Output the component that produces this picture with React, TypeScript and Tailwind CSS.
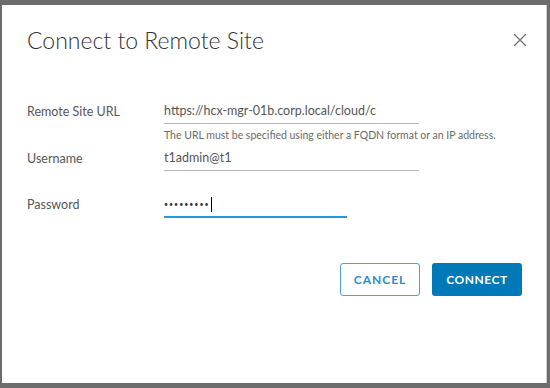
export default function App() {
  return (
    <div className="flex h-[388px] w-[550px] bg-[#6d6d6d] pl-[2px] pr-[3px] pt-[5px] pb-[5px] font-['Lato',sans-serif]">
      <div className="flex flex-1 flex-col border-r-[1px] border-r-[#d0d0d0] bg-white">
        <header className="flex items-start justify-between pl-[25px] pr-[19px] pt-[20px]">
          <h1 className="text-[23px] font-light leading-[30px] text-[#333]">
            Connect to Remote Site
          </h1>
          <button className="mt-[8px] text-[#747474]">
            <svg width="14" height="14" viewBox="0 0 14 14" fill="none" stroke="currentColor" strokeWidth="1.3">
              <path d="M1 1 L13 13 M13 1 L1 13" />
            </svg>
          </button>
        </header>

        <form className="mt-[45px] grid grid-cols-[137px_255px] pl-[25px] text-[12.5px] text-[#565656]">
          <label className="flex h-[24px] items-center">Remote Site URL</label>
          <div>
            <div className="flex h-[24px] items-center whitespace-nowrap border-b border-[#b5b5b5]">
              https://hcx-mgr-01b.corp.local/cloud/c
            </div>
            <p className="mt-[4px] w-[340px] whitespace-nowrap text-[10.5px] leading-[14px] text-[#6a6a6a]">
              The URL must be specified using either a FQDN format or an IP address.
            </p>
          </div>

          <label className="mt-[5px] flex h-[24px] items-center">Username</label>
          <div className="mt-[5px] flex h-[24px] items-center border-b border-[#b5b5b5]">
            t1admin@t1
          </div>

          <label className="mt-[22px] flex h-[25px] items-center">Password</label>
          <div className="mt-[22px] w-[183px] border-b-2 border-[#1f9ae0]">
            <div className="flex h-[23px] items-center">
              <span className="text-[7px] tracking-[1px] text-[#333]">•••••••••</span>
              <span className="ml-[1px] h-[15px] w-[1px] bg-black" />
            </div>
          </div>
        </form>

        <div className="mt-[45px] flex justify-end gap-[12px] pr-[24px]">
          <button className="h-[33px] w-[80px] rounded-[3px] border border-[#49a3d6] text-[12px] font-bold tracking-[1px] text-[#2b8ccc]">
            CANCEL
          </button>
          <button className="h-[33px] w-[90px] rounded-[3px] bg-[#0079b8] text-[12px] font-bold tracking-[0.5px] text-white">
            CONNECT
          </button>
        </div>
      </div>
    </div>
  );
}
